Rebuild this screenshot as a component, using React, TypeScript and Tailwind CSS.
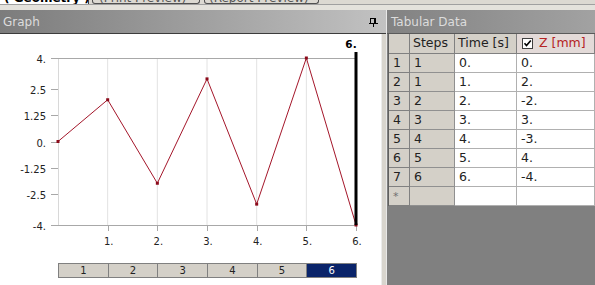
import React from "react";

const pts: [number, number][] = [
  [0, 0],
  [1, 2],
  [2, -2],
  [3, 3],
  [4, -3],
  [5, 4],
  [6, -4],
];
const X = (v: number) => 58 + v * 49.67;
const Y = (v: number) => 141.5 - v * 20.875;

const yTicks: [number, string][] = [
  [4, "4."],
  [2.5, "2.5"],
  [1.25, "1.25"],
  [0, "0."],
  [-1.25, "-1.25"],
  [-2.5, "-2.5"],
  [-4, "-4."],
];

function Chart() {
  const line = pts.map(([x, y]) => `${X(x)},${Y(y)}`).join(" ");
  return (
    <svg width="381" height="226" viewBox="0 34 381 226" className="block">
      {[1, 2, 3, 4, 5].map((i) => (
        <line key={i} x1={X(i)} x2={X(i)} y1={58} y2={225} stroke="#e2e2e2" strokeWidth="1" />
      ))}
      <line x1={58.5} x2={58.5} y1={58} y2={225} stroke="#d8d8d8" strokeWidth="1" />
      <line x1={51} x2={357} y1={58.5} y2={58.5} stroke="#a8a8a8" strokeWidth="1" />
      <line x1={51} x2={357} y1={225.5} y2={225.5} stroke="#a8a8a8" strokeWidth="1" />
      {yTicks.map(([v, t]) => (
        <g key={t}>
          <line x1={51} x2={58} y1={Math.round(Y(v)) + 0.5} y2={Math.round(Y(v)) + 0.5} stroke="#a8a8a8" />
          <text
            x={46}
            y={Y(v) + 5}
            textAnchor="end"
            fontSize="10"
            fill="#222"
            fontFamily="'DejaVu Sans', sans-serif"
          >
            {t}
          </text>
        </g>
      ))}
      {[1, 2, 3, 4, 5, 6].map((i) => (
        <g key={i}>
          <line x1={Math.round(X(i)) + 0.5} x2={Math.round(X(i)) + 0.5} y1={225} y2={231} stroke="#a8a8a8" />
          <text
            x={X(i) + 1}
            y={245}
            textAnchor="middle"
            fontSize="10"
            fill="#222"
            fontFamily="'DejaVu Sans', sans-serif"
          >
            {i}.
          </text>
        </g>
      ))}
      <polyline points={line} fill="none" stroke="#a4162a" strokeWidth="1" />
      {pts.map(([x, y], i) => (
        <rect key={i} x={X(x) - 1.5} y={Y(y) - 1.5} width="3" height="3" fill="#8b0a1a" />
      ))}
      <rect x={354.5} y={52} width={3} height={173} fill="#000" />
      <text
        x={351}
        y={48}
        textAnchor="middle"
        fontSize="10.5"
        fontWeight="bold"
        fill="#000"
        fontFamily="'DejaVu Sans', sans-serif"
      >
        6.
      </text>
    </svg>
  );
}

const rows = [
  ["1", "1", "0.", "0."],
  ["2", "1", "1.", "2."],
  ["3", "2", "2.", "-2."],
  ["4", "3", "3.", "3."],
  ["5", "4", "4.", "-3."],
  ["6", "5", "5.", "4."],
  ["7", "6", "6.", "-4."],
];

function Table() {
  return (
    <div className="ml-px w-[206px] grid grid-cols-[21px_45px_62px_78px] text-[12.5px] leading-none text-[#222] border-l border-[#606060]">
      <div className="h-[20px] bg-[#d4d0c8] border-r border-b border-[#808080]" />
      <div className="h-[20px] bg-[#d4d0c8] border-r border-b border-[#808080] flex items-center pl-[3px]">Steps</div>
      <div className="h-[20px] bg-[#d4d0c8] border-r border-b border-[#808080] flex items-center pl-[3px]">Time [s]</div>
      <div className="h-[20px] bg-[#e3dad8] border-r border-b border-[#808080] flex items-center pl-[5px] gap-[6px]">
        <span className="w-[11px] h-[11px] bg-white border border-[#404040] flex items-center justify-center">
          <svg width="9" height="9" viewBox="0 0 9 9">
            <path d="M1.5 4.2 L3.5 6.5 L7.8 1.5" stroke="#000" strokeWidth="1.6" fill="none" />
          </svg>
        </span>
        <span className="text-[#b42323]">Z [mm]</span>
      </div>
      {rows.map((r) => (
        <React.Fragment key={r[0]}>
          <div className="h-[19px] bg-[#d4d0c8] border-r border-b border-[#808080] flex items-center pl-[4px]">{r[0]}</div>
          <div className="h-[19px] bg-[#d4d0c8] border-r border-b border-[#909090] flex items-center pl-[4px]">{r[1]}</div>
          <div className="h-[19px] bg-white border-r border-b border-[#b0b0b0] flex items-center pl-[4px]">{r[2]}</div>
          <div className="h-[19px] bg-white border-r border-b border-[#b0b0b0] flex items-center pl-[4px]">{r[3]}</div>
        </React.Fragment>
      ))}
      <div className="h-[19px] bg-[#d4d0c8] border-r border-b border-[#808080] flex items-center pl-[4px] text-[#707070] text-[11px]">*</div>
      <div className="h-[19px] bg-[#d4d0c8] border-r border-b border-[#909090]" />
      <div className="h-[19px] bg-white border-r border-b border-[#b0b0b0]" />
      <div className="h-[19px] bg-white border-r border-b border-[#b0b0b0]" />
    </div>
  );
}

export default function App() {
  return (
    <div
      className="w-[595px] h-[285px] overflow-hidden bg-[#d4d0c8] flex flex-col"
      style={{ fontFamily: "'DejaVu Sans', sans-serif" }}
    >
      <div className="h-[10px] flex flex-col bg-[#dcd9d2]">
        <div className="h-[4px] overflow-hidden flex items-end text-[12px] leading-[12px]">
          <div className="w-[89px] h-[12px] shrink-0 bg-white pl-[4px] font-bold text-black border-r border-[#404040] whitespace-nowrap overflow-hidden">( Geometry )</div>
          <div className="w-[3px] shrink-0" />
          <div className="w-[108px] h-[12px] shrink-0 pl-[6px] text-[#555] border-x border-b border-[#505050] rounded-b-[3px] whitespace-nowrap overflow-hidden">(Print Preview)</div>
          <div className="w-[4px] shrink-0" />
          <div className="w-[115px] h-[12px] shrink-0 pl-[4px] text-[#555] border-x border-b border-[#505050] rounded-b-[3px] whitespace-nowrap overflow-hidden">(Report Preview)</div>
        </div>
        <div className="h-px bg-[#a0a0a0]" />
        <div className="flex-1 bg-[#e4e2dc]" />
      </div>
      <div className="flex flex-1 min-h-0">
        <div className="w-[386px] flex flex-col">
          <div className="h-[24px] bg-gradient-to-r from-[#7c7c7c] to-[#c2c2c2] border-b border-[#3c3c3c] flex items-center justify-between pl-[3px] pr-[8px]">
            <span className="text-[12px] text-[#dcdcdc]">Graph</span>
            <svg width="9" height="10" viewBox="0 0 9 10">
              <rect x="1" y="1" width="1" height="5" fill="#000" />
              <rect x="1" y="1" width="6" height="1" fill="#000" />
              <rect x="5" y="1" width="2" height="5" fill="#000" />
              <rect x="0" y="6" width="9" height="1" fill="#000" />
              <rect x="4" y="7" width="1" height="3" fill="#000" />
            </svg>
          </div>
          <div className="flex-1 flex">
            <div className="w-[381px] bg-white flex flex-col">
              <Chart />
              <div className="mt-[3px] ml-[58px] w-[299px] h-[15px] flex border border-[#808080] text-[10px] leading-none text-[#222]">
                {[1, 2, 3, 4, 5].map((i) => (
                  <div key={i} className="flex-1 bg-[#d4d0c8] border-r border-[#808080] flex items-center justify-center">
                    {i}
                  </div>
                ))}
                <div className="flex-1 bg-[#0a246a] text-white flex items-center justify-center">6</div>
              </div>
            </div>
            <div className="flex-1 bg-[#d8d5ce] border-l border-[#ececec]" />
          </div>
        </div>
        <div className="flex-1 flex flex-col border-l border-[#e8e8e8]">
          <div className="h-[24px] bg-gradient-to-r from-[#828282] to-[#a2a2a2] border-b border-[#5a5a5a] flex items-center pl-[4px]">
            <span className="text-[12px] text-[#dcdcdc]">Tabular Data</span>
          </div>
          <div className="flex-1 bg-[#808080]">
            <Table />
          </div>
        </div>
      </div>
    </div>
  );
}
